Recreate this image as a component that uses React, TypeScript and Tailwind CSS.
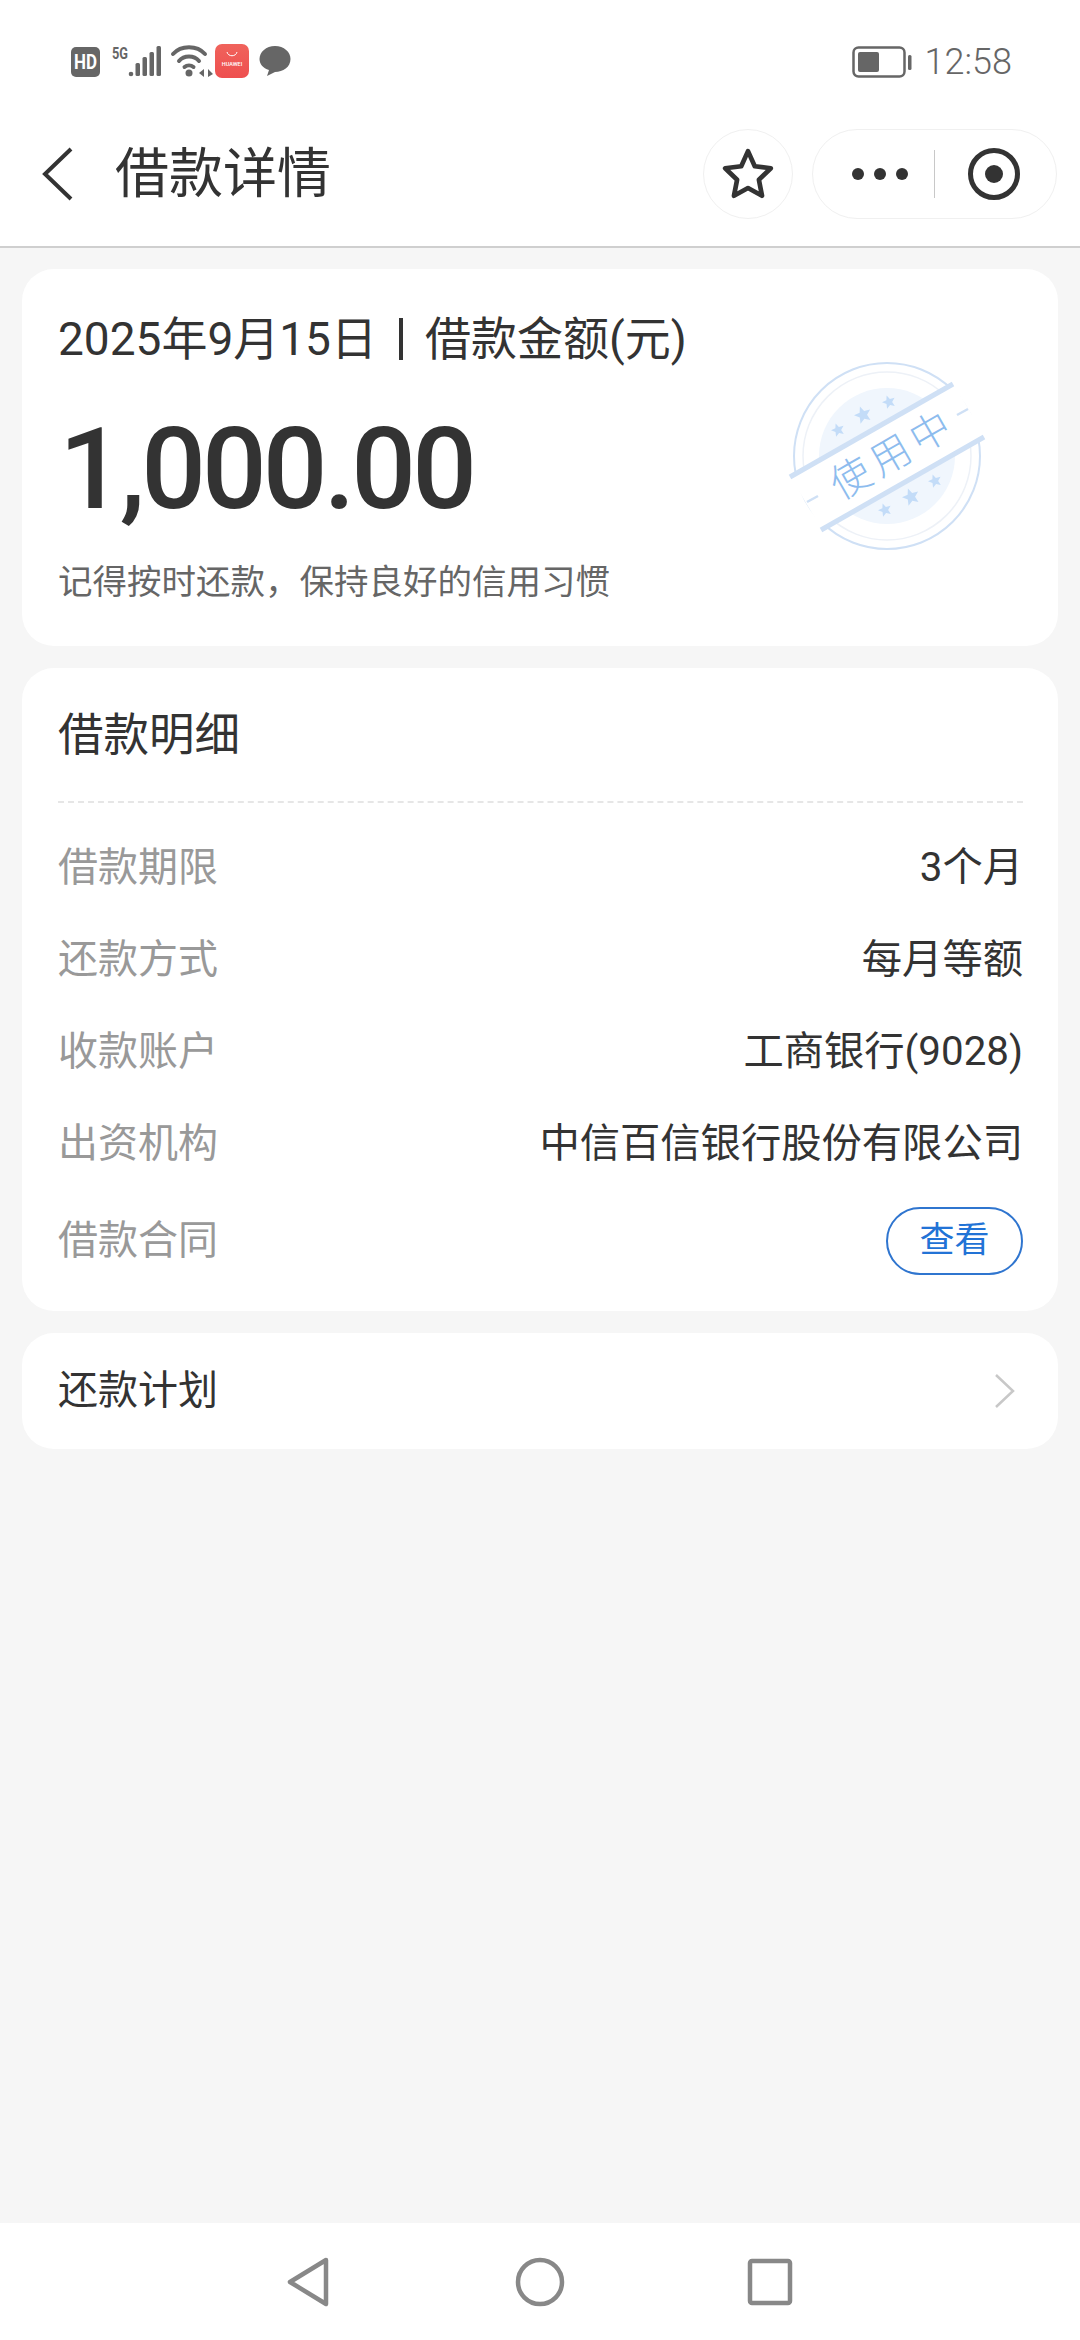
const cjk = "font-['Roboto','Noto_Sans_CJK_SC',sans-serif]";

const rows = [
  { label: '借款期限', value: '3个月' },
  { label: '还款方式', value: '每月等额' },
  { label: '收款账户', value: '工商银行(9028)' },
  { label: '出资机构', value: '中信百信银行股份有限公司' },
];

function StatusBar() {
  return (
    <div className="flex h-[100px] items-start justify-between pl-[71px] pr-[68px] pt-[44px]">
      <svg width="222" height="36" viewBox="0 0 222 36" className="shrink-0">
        <rect x="0" y="3" width="29" height="30" rx="5" fill="#666" />
        <text x="14.5" y="25" textAnchor="middle" fontSize="20" fontWeight="700" fill="#fff" fontFamily="Roboto" textLength="23" lengthAdjust="spacingAndGlyphs">HD</text>
        <text x="41" y="15" fontSize="17" fontWeight="700" fill="#666" fontFamily="Roboto" textLength="16" lengthAdjust="spacingAndGlyphs">5G</text>
        <g fill="#666">
          <circle cx="60" cy="30" r="2.300" />
          <rect x="64.5" y="19" width="4.500" height="13" rx="1.500" />
          <rect x="71.5" y="13" width="4.500" height="19" rx="1.500" />
          <rect x="78.5" y="8" width="4.500" height="24" rx="1.500" />
          <rect x="85.5" y="2" width="4.500" height="30" rx="1.500" />
        </g>
        <g fill="none" stroke="#666" strokeWidth="4" strokeLinecap="round">
          <path d="M102 10 C110 1 126 1 134 10" />
          <path d="M108 17 C113 11 123 11 128 17" />
          <path d="M113.500 23 C116 21 120 21 122.500 23" />
        </g>
        <circle cx="118" cy="29" r="3.500" fill="#666" />
        <path d="M128 29 L133 25 V33 Z M137 25 L142 30 L137 33 Z" fill="#666" />
        <defs>
          <linearGradient id="huawei" x1="0" y1="0" x2="0" y2="1">
            <stop offset="0" stopColor="#f0635c" />
            <stop offset="1" stopColor="#ee4f4f" />
          </linearGradient>
        </defs>
        <rect x="144" y="0" width="34" height="34" rx="7" fill="url(#huawei)" />
        <path d="M156 8 C157 13 165 13 166 8" fill="none" stroke="#fff" strokeWidth="1" />
        <text x="161" y="22" textAnchor="middle" fontSize="5.500" fontWeight="500" fill="#fff" fontFamily="Roboto">HUAWEI</text>
        <path d="M204 2 C213 2 219.500 8 219.500 15 C219.500 23 212 28 204 28 L196 32 L198 26 C192 24 188.500 20 188.500 15 C188.500 8 195 2 204 2 Z" fill="#666" />
      </svg>
      <div className="flex items-center">
        <svg width="62" height="36" viewBox="0 0 62 36">
          <rect x="1.500" y="3.500" width="51" height="29" rx="5" fill="none" stroke="#666" strokeWidth="2.500" />
          <rect x="6" y="8" width="21" height="20" rx="2" fill="#666" />
          <rect x="56" y="11" width="3.500" height="15" rx="1.500" fill="#666" />
        </svg>
        <span className="ml-[11px] font-['Roboto',sans-serif] text-[36px] font-light leading-[36px] text-[#666]">12:58</span>
      </div>
    </div>
  );
}

function Header() {
  return (
    <div className="flex h-[148px] items-center justify-between border-b-2 border-[#cfcfcf] bg-white pt-[3px]">
      <div className="flex items-center">
        <svg width="36" height="56" viewBox="0 0 36 56" className="ml-[39px]">
          <path d="M32 2 L6 27 L32 52" fill="none" stroke="#333" strokeWidth="4" />
        </svg>
        <h1 className={`${cjk} ml-[40px] text-[54px] font-normal leading-[64px] text-[#333]`}>借款详情</h1>
      </div>
      <div className="mb-[2px] mr-[23px] flex items-center gap-[19px]">
        <div className="flex h-[90px] w-[90px] items-center justify-center rounded-full border border-[#f0f0f0]">
          <svg width="54" height="54" viewBox="0 0 52 52">
            <path d="M26 4 L32.500 18.500 L48 20.500 L36.500 31.500 L39.500 47 L26 39.500 L12.500 47 L15.500 31.500 L4 20.500 L19.500 18.500 Z" fill="none" stroke="#333" strokeWidth="4.500" strokeLinejoin="round" />
          </svg>
        </div>
        <div className="flex h-[90px] w-[245px] items-center rounded-full border border-[#f0f0f0]">
          <div className="ml-[39px] flex gap-[10px]">
            <span className="h-[12px] w-[12px] rounded-full bg-[#333]" />
            <span className="h-[12px] w-[12px] rounded-full bg-[#333]" />
            <span className="h-[12px] w-[12px] rounded-full bg-[#333]" />
          </div>
          <div className="ml-[26px] h-[48px] w-px bg-[#c8c8c8]" />
          <svg width="54" height="54" viewBox="0 0 54 54" className="ml-[32px]">
            <circle cx="27" cy="27" r="23.500" fill="none" stroke="#333" strokeWidth="5" />
            <circle cx="27" cy="27" r="9" fill="#333" />
          </svg>
        </div>
      </div>
    </div>
  );
}

function Star({ x, y, r, fill }: { x: number; y: number; r: number; fill: string }) {
  const points = Array.from({ length: 10 }, (_, i) => {
    const a = (Math.PI / 5) * i - Math.PI / 2 - 0.35;
    const d = i % 2 === 0 ? r : r * 0.45;
    return `${x + d * Math.cos(a)},${y + d * Math.sin(a)}`;
  }).join(' ');
  return <polygon points={points} fill={fill} />;
}

function Stamp() {
  return (
    <svg width="280" height="250" viewBox="0 0 280 250" className="absolute left-[718px] top-[61px]">
      <circle cx="147" cy="126" r="93" fill="none" stroke="#cfe0f5" strokeWidth="2" />
      <circle cx="147" cy="126" r="84" fill="none" stroke="#edf1f7" strokeWidth="1.500" />
      <circle cx="147" cy="126" r="68" fill="#f0f6fd" />
      <Star x={98} y={100} r={7} fill="#c3dcf8" />
      <Star x={123} y={85} r={9} fill="#c3dcf8" />
      <Star x={149} y={72} r={7} fill="#c3dcf8" />
      <Star x={145} y={180} r={7} fill="#c3dcf8" />
      <Star x={171} y={167} r={9} fill="#c3dcf8" />
      <Star x={195} y={151} r={7} fill="#c3dcf8" />
      <polygon points="50,146 213,53 245,106 82,200" fill="#fff" />
      <path d="M50 147 L213 54" stroke="#cfe0f5" strokeWidth="5" />
      <path d="M81 200 L244 107" stroke="#cfe0f5" strokeWidth="5" />
      <path d="M67 172 L78 166" stroke="#cfe0f5" strokeWidth="2.500" />
      <path d="M217 85 L228 79" stroke="#cfe0f5" strokeWidth="2.500" />
      <text x="154" y="141" textAnchor="middle" transform="rotate(-30 148 127)" fontSize="40" fontWeight="300" letterSpacing="6" fill="#8dbcee" fontFamily="Noto Sans CJK SC">使用中</text>
    </svg>
  );
}

export default function App() {
  return (
    <div className={`${cjk} flex h-[2340px] w-[1080px] flex-col overflow-hidden bg-[#f6f6f6]`}>
      <div className="bg-white">
        <StatusBar />
        <Header />
      </div>

      <main className="flex flex-1 flex-col gap-[22px] px-[22px] pt-[21px]">
        <section className="relative h-[377px] rounded-[32px] bg-white pl-[36px] pt-[40px]">
          <div className="flex items-center text-[46px] leading-[60px] text-[#333]">
            <span>2025年9月15日</span>
            <span className="mx-[22px] h-[42px] w-[4px] bg-[#333]" />
            <span>借款金额(元)</span>
          </div>
          <div className="ml-px mt-[35px] font-['Roboto',sans-serif] text-[114px] font-medium leading-[130px] tracking-[-4px] text-[#333]">
            1,000.00
          </div>
          <div className="mt-[23px] text-[34.500px] leading-[50px] text-[#666]">
            记得按时还款，保持良好的信用习惯
          </div>
          <Stamp />
        </section>

        <section className="h-[643px] rounded-[32px] bg-white pl-[36px] pr-[35px]">
          <h2 className="flex h-[135px] items-center border-b-2 border-dashed border-[#e6e6e6] pt-[4px] text-[45.500px] font-normal text-[#333]">
            借款明细
          </h2>
          <div className="mt-[19px]">
            {rows.map((row) => (
              <div key={row.label} className="flex h-[92px] items-center justify-between">
                <span className="text-[40px] text-[#999]">{row.label}</span>
                <span className="text-[40.300px] text-[#333]">{row.value}</span>
              </div>
            ))}
            <div className="mt-[17px] flex h-[68px] items-center justify-between">
              <span className="text-[40px] text-[#999]">借款合同</span>
              <span className="flex h-[68px] w-[137px] items-center justify-center rounded-full border-2 border-[#2f75cf] text-[35px] text-[#2273d6]">
                查看
              </span>
            </div>
          </div>
        </section>

        <section className="flex h-[116px] items-center justify-between rounded-[32px] bg-white pl-[36px] pr-[42px]">
          <span className="text-[40px] text-[#333]">还款计划</span>
          <svg width="22" height="36" viewBox="0 0 22 36">
            <path d="M2 2 L19 18 L2 34" fill="none" stroke="#c8c8c8" strokeWidth="2.500" />
          </svg>
        </section>
      </main>

      <nav className="flex h-[117px] items-start justify-between bg-white pl-[286px] pr-[287px] pt-[33px]">
        <svg width="46" height="52" viewBox="0 0 46 52">
          <path d="M40 4 L4 26 L40 48 Z" fill="none" stroke="#888" strokeWidth="4.500" strokeLinejoin="round" />
        </svg>
        <svg width="52" height="52" viewBox="0 0 52 52">
          <circle cx="26" cy="26" r="22" fill="none" stroke="#888" strokeWidth="4.500" />
        </svg>
        <svg width="46" height="52" viewBox="0 0 46 52">
          <rect x="3" y="5" width="40" height="42" rx="2" fill="none" stroke="#888" strokeWidth="4.500" />
        </svg>
      </nav>
    </div>
  );
}
